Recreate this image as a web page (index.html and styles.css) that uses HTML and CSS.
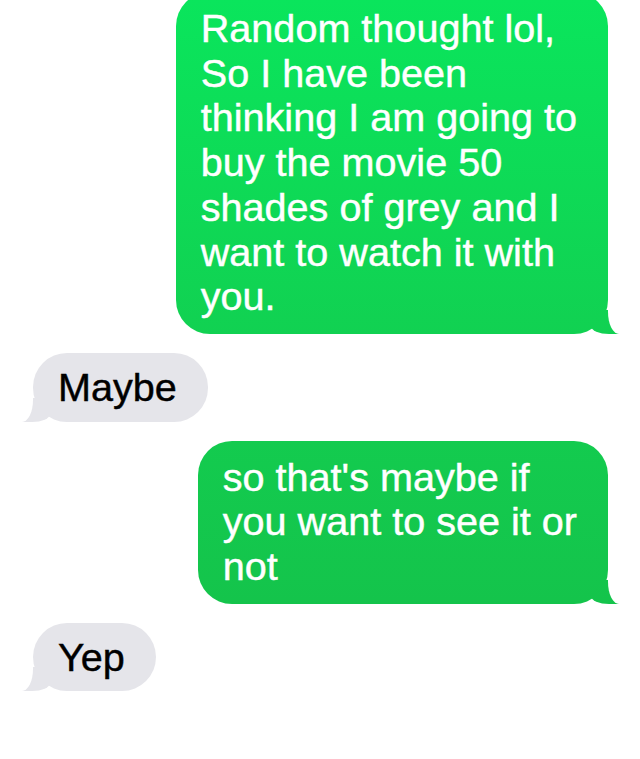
FILE: index.html
```html
<!DOCTYPE html>
<html lang="en">
<head>
    <meta charset="UTF-8">
    <meta name="viewport" content="width=device-width, initial-scale=1.0">
    <title>Messages</title>
    <link rel="stylesheet" href="styles.css">
</head>
<body>
<div class="thread">
    <div class="bubble sent">
        Random thought lol,<br>
        So I have been<br>
        thinking I am going to<br>
        buy the movie 50<br>
        shades of grey and I<br>
        want to watch it with<br>
        you.
    </div>
    <div class="bubble received">Maybe</div>
    <div class="bubble sent">
        so that's maybe if<br>
        you want to see it or<br>
        not
    </div>
    <div class="bubble received">Yep</div>
</div>
</body>
</html>
```
FILE: styles.css
```css
/* 全局样式 */
body {
    margin: 0;
    padding: 0;
    background: #fff;
    font-family: 'Liberation Sans', Arial, sans-serif;
    overflow: hidden;
}

.thread {
    display: flex;
    flex-direction: column;
    gap: 19px;
    margin-top: -8px;
    padding: 0 32px 0 33px;
}

.bubble {
    position: relative;
    font-size: 39.6px;
    line-height: 44.7px;
    border-radius: 34px;
    -webkit-text-stroke: 0.45px currentColor;
}

/* 发出的消息 */
.sent {
    align-self: flex-end;
    padding: 14px 31px 15px 25px;
    color: #fff;
    background: linear-gradient(to bottom, #0ae55c, #13cc4f 55%, #15bd48) fixed;
}

/* 收到的消息 */
.received {
    align-self: flex-start;
    padding: 12px 31px 12px 25px;
    color: #000;
    background: #e5e5ea;
}

/* 气泡尾巴 */
.bubble::before,
.bubble::after {
    content: "";
    position: absolute;
    bottom: 0;
    height: 24px;
}

.sent::before {
    right: -11px;
    width: 28px;
    background: inherit;
    border-bottom-left-radius: 18px 8px;
}

.sent::after {
    right: -24px;
    width: 24px;
    background: #fff;
    border-bottom-left-radius: 11px 22px;
}

.received::before {
    left: -11px;
    width: 28px;
    background: inherit;
    border-bottom-right-radius: 18px 8px;
}

.received::after {
    left: -24px;
    width: 24px;
    background: #fff;
    border-bottom-right-radius: 11px 22px;
}
```
